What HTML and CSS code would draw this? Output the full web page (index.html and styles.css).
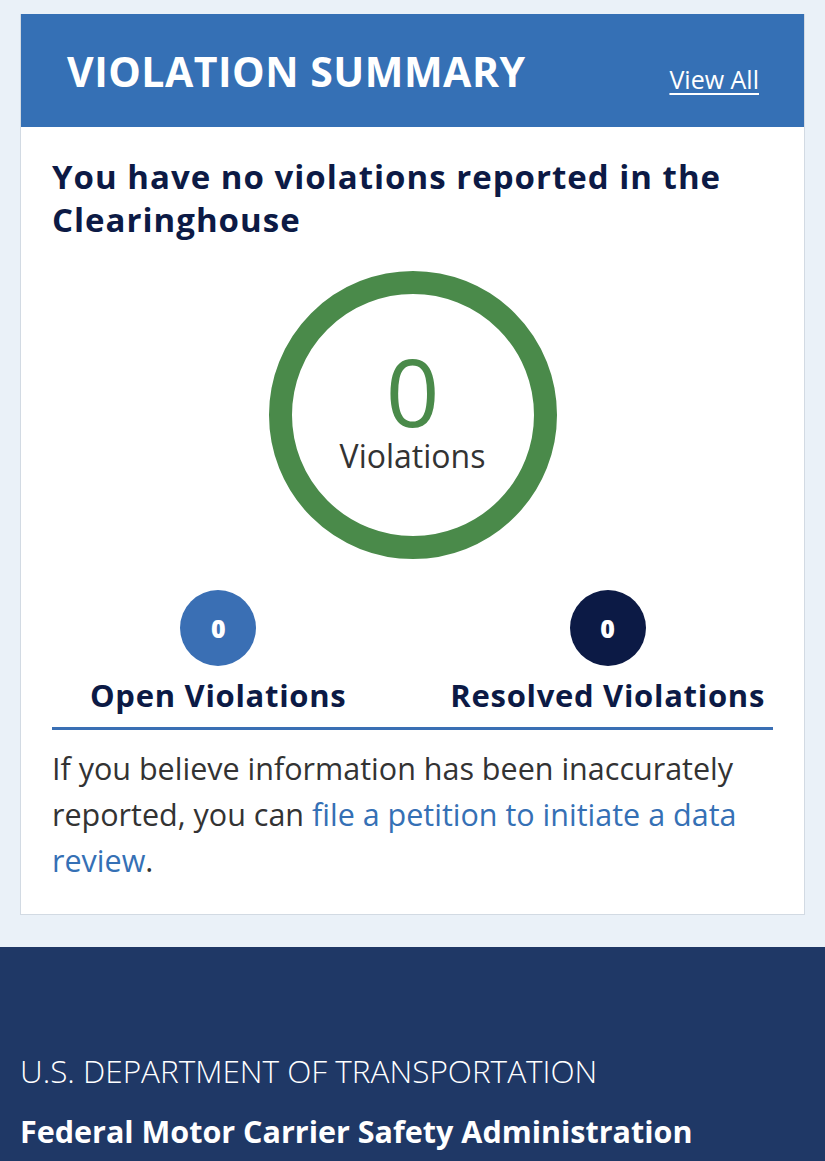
FILE: index.html
```html
<!DOCTYPE html>
<html lang="en">
<head>
<meta charset="utf-8">
<title>Violation Summary</title>
<link rel="stylesheet" href="styles.css">
</head>
<body>
<main class="page">
  <section class="card">
    <header class="card-header">
      <h1 class="card-title">VIOLATION SUMMARY</h1>
      <a class="view-all" href="#">View All</a>
    </header>
    <div class="card-body">
      <h2 class="status">You have no violations reported in the Clearinghouse</h2>
      <div class="ring-wrap">
        <div class="ring">
          <span class="ring-count">0</span>
          <span class="ring-label">Violations</span>
        </div>
      </div>
      <div class="stats">
        <div class="stat">
          <span class="badge badge-open">0</span>
          <span class="stat-label">Open Violations</span>
        </div>
        <div class="stat">
          <span class="badge badge-resolved">0</span>
          <span class="stat-label">Resolved Violations</span>
        </div>
      </div>
      <p class="note">If you believe information has been inaccurately reported, you can <a href="#">file a petition to initiate a data review</a>.</p>
    </div>
  </section>
</main>
<footer class="footer">
  <div class="dept">U.S. DEPARTMENT OF TRANSPORTATION</div>
  <div class="agency">Federal Motor Carrier Safety Administration</div>
</footer>
</body>
</html>
```
FILE: styles.css
```css
html, body {
  margin: 0;
  padding: 0;
}
body {
  background: #eaf1f8;
  font-family: "Open Sans", "Liberation Sans", sans-serif;
  color: #333333;
}
.page {
  padding: 14px 20px 32px;
}
.card {
  background: #ffffff;
  border: 1px solid #d2dae3;
  border-top: none;
}
.card-header {
  background: #3570b5;
  height: 113px;
  display: flex;
  align-items: center;
  justify-content: space-between;
  padding: 0 45px 0 46px;
}
.card-title {
  margin: 0;
  color: #ffffff;
  font-family: "Open Sans", sans-serif;
  font-weight: 700;
  font-size: 41px;
  letter-spacing: 0.5px;
}
.view-all {
  color: #ffffff;
  font-size: 25px;
  text-decoration: underline;
  text-underline-offset: 4px;
  margin-top: 16px;
}
.card-body {
  padding: 28px 31px 31px;
}
.status {
  margin: 0;
  color: #0c1a45;
  font-family: "Open Sans", sans-serif;
  font-weight: 700;
  font-size: 33px;
  letter-spacing: 1px;
  line-height: 43px;
}
.ring-wrap {
  display: flex;
  justify-content: center;
  margin-top: 30px;
}
.ring {
  width: 288px;
  height: 288px;
  box-sizing: border-box;
  border: 23px solid #4a8a4a;
  border-radius: 50%;
  display: flex;
  flex-direction: column;
  align-items: center;
  justify-content: center;
}
.ring-count {
  color: #4a8a4a;
  font-size: 94px;
  line-height: 92px;
  margin-top: -10px;
}
.ring-label {
  color: #333333;
  font-size: 32px;
  line-height: 38px;
}
.stats {
  display: flex;
  justify-content: space-between;
  margin-top: 31px;
  padding-bottom: 13px;
  border-bottom: 3px solid #3a6fb4;
}
.stat {
  display: flex;
  flex-direction: column;
  align-items: center;
  gap: 10px;
}
.stat:first-child {
  margin-left: 38px;
}
.stat:last-child {
  margin-right: 8px;
}
.badge {
  width: 76px;
  height: 76px;
  border-radius: 50%;
  display: flex;
  align-items: center;
  justify-content: center;
  color: #ffffff;
  font-weight: 800;
  font-size: 25px;
}
.badge-open {
  background: #3a6fb4;
}
.badge-resolved {
  background: #0c1a45;
}
.stat-label {
  color: #0c1a45;
  font-weight: 700;
  font-size: 31px;
  letter-spacing: 0.7px;
  line-height: 38px;
}
.note {
  margin: 15px 0 0;
  font-size: 30.5px;
  line-height: 46px;
  color: #333333;
}
.note a {
  color: #3570b5;
  text-decoration: none;
}
.footer {
  background: #1f3866;
  padding: 104px 20px 14px;
  color: #ffffff;
}
.dept {
  font-size: 31.5px;
  font-weight: 300;
  line-height: 40px;
}
.agency {
  margin-top: 20px;
  font-size: 30.5px;
  font-weight: 700;
  line-height: 40px;
}
```
